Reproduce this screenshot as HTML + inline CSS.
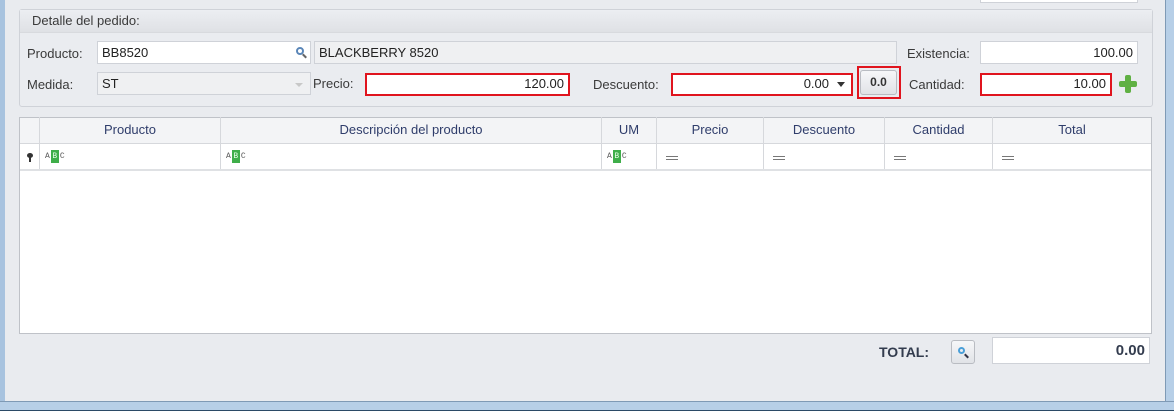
<!DOCTYPE html>
<html><head><meta charset="utf-8"><style>
*{box-sizing:border-box;margin:0;padding:0}
body{width:1174px;height:411px;overflow:hidden;background:#e9ebef;font-family:"Liberation Sans",sans-serif;font-size:13px;color:#333;position:relative}
.a{position:absolute}
.lbl{position:absolute;color:#3a3a3a;font-size:13px}
.tb{position:absolute;background:#fff;border:1px solid #cfd2d8;height:23px;padding:3px 4px;font-size:13px;color:#222;white-space:nowrap}
.red{border:2px solid #e0141e;padding-top:1px}
.r{text-align:right}
.hd{position:absolute;top:117px;height:26px;border-right:1px solid #d6d8dc;text-align:center;line-height:25px;color:#2f3d6b;font-size:13px}
.fc{position:absolute;top:144px;height:25px;border-right:1px solid #d6d8dc}
.abc{position:absolute;left:5px;top:6px;height:13px;font-size:8px;line-height:13px;font-family:"Liberation Mono",monospace;color:#555}
.abc b{display:inline-block;width:8px;height:13px;text-align:center;background:#3fae4a;color:#e8ffe8;font-weight:normal;margin:0 1px}
.eq{position:absolute;left:9px;top:12px;width:12px;height:4px;border-top:1px solid #777;border-bottom:1px solid #777}
</style></head><body>
<div class="a" style="left:0;top:0;width:5px;height:411px;background:#a8c3df"></div>
<div class="a" style="right:0;top:0;width:9px;height:411px;background:#b7cfe7;border-left:1px solid #7f9ab5"></div>
<div class="a" style="left:0;top:401px;width:1174px;height:10px;background:#b7cfe7;border-top:1px solid #7f9ab5;border-bottom:1px solid #2b4a66"></div>
<div class="a" style="left:980px;top:-2px;width:158px;height:5px;background:#fff;border:1px solid #cfd2d8"></div>

<div class="a" style="left:19px;top:9px;width:1134px;height:98px;border:1px solid #cfd2d8;border-radius:3px;background:#eaecf0"></div>
<div class="a" style="left:20px;top:10px;width:1132px;height:23px;background:linear-gradient(#eceef2,#dfe1e5);border-bottom:1px solid #d8dade"></div>
<div class="lbl" style="left:32px;top:13px">Detalle del pedido:</div>

<div class="lbl" style="left:27px;top:46px">Producto:</div>
<div class="tb" style="left:97px;top:41px;width:214px">BB8520<span style="position:absolute;right:6px;top:5px;width:8px;height:8px;border:2px solid #5a86b8;border-radius:50%"></span><span style="position:absolute;right:3px;top:13px;width:5px;height:2px;background:#666;transform:rotate(45deg)"></span></div>
<div class="tb" style="left:314px;top:41px;width:583px;background:#eff0f2">BLACKBERRY 8520</div>
<div class="lbl" style="left:907px;top:46px">Existencia:</div>
<div class="tb r" style="left:980px;top:41px;width:158px">100.00</div>

<div class="lbl" style="left:27px;top:77px">Medida:</div>
<div class="tb" style="left:97px;top:72px;width:214px;background:#eff0f2">ST<span style="position:absolute;right:7px;top:10px;border:4px solid transparent;border-top:4px solid #c8c8c8"></span></div>
<div class="lbl" style="left:313px;top:76px">Precio:</div>
<div class="tb r red" style="left:365px;top:73px;width:205px;height:23px">120.00</div>
<div class="lbl" style="left:593px;top:77px">Descuento:</div>
<div class="tb r red" style="left:671px;top:73px;width:182px;height:23px;padding-right:22px">0.00<span style="position:absolute;right:6px;top:7px;border:4px solid transparent;border-top:5px solid #333"></span></div>
<div class="a" style="left:857px;top:66px;width:44px;height:33px;border:2px solid #e0141e"></div>
<div class="a" style="left:860px;top:70px;width:37px;height:25px;border:1px solid #b9bcc2;border-radius:3px;background:linear-gradient(#f6f7f9,#e1e3e7);text-align:center;line-height:23px;font-weight:bold;font-size:12px;color:#333">0.0</div>
<div class="lbl" style="left:909px;top:77px">Cantidad:</div>
<div class="tb r red" style="left:980px;top:73px;width:132px;height:23px">10.00</div>
<div class="a" style="left:1119px;top:81px;width:18px;height:6px;background:#5fb043;border-radius:2px"></div>
<div class="a" style="left:1125px;top:75px;width:6px;height:18px;background:#5fb043;border-radius:2px"></div>

<div class="a" style="left:19px;top:117px;width:1133px;height:217px;background:#fff;border:1px solid #bfc2c8"></div>
<div class="a" style="left:20px;top:118px;width:1131px;height:26px;background:#f3f4f6;border-bottom:1px solid #d6d8dc"></div>
<div class="a" style="left:20px;top:144px;width:1131px;height:27px;border-bottom:2px solid #dfe1e4"></div>
<div class="hd" style="left:20px;width:20px"></div>
<div class="hd" style="left:40px;width:181px">Producto</div>
<div class="hd" style="left:221px;width:381px">Descripción del producto</div>
<div class="hd" style="left:602px;width:55px">UM</div>
<div class="hd" style="left:657px;width:107px">Precio</div>
<div class="hd" style="left:764px;width:121px">Descuento</div>
<div class="hd" style="left:885px;width:108px">Cantidad</div>
<div class="hd" style="left:993px;width:158px;border-right:none">Total</div>
<div class="fc" style="left:20px;width:20px"><span style="position:absolute;left:7px;top:9px;width:6px;height:5px;background:#333;border-radius:50%"></span><span style="position:absolute;left:9px;top:13px;width:2px;height:5px;background:#333"></span></div>
<div class="fc" style="left:40px;width:181px"><span class="abc">A<b>B</b>C</span></div>
<div class="fc" style="left:221px;width:381px"><span class="abc">A<b>B</b>C</span></div>
<div class="fc" style="left:602px;width:55px"><span class="abc">A<b>B</b>C</span></div>
<div class="fc" style="left:657px;width:107px"><span class="eq"></span></div>
<div class="fc" style="left:764px;width:121px"><span class="eq"></span></div>
<div class="fc" style="left:885px;width:108px"><span class="eq"></span></div>
<div class="fc" style="left:993px;width:158px;border-right:none"><span class="eq"></span></div>

<div class="lbl" style="left:879px;top:344px;font-weight:bold;color:#333c4e;font-size:14px">TOTAL:</div>
<div class="a" style="left:951px;top:340px;width:24px;height:24px;border:1px solid #b9bcc2;border-radius:3px;background:linear-gradient(#f6f7f9,#e1e3e7)"><span style="position:absolute;left:6px;top:6px;width:7px;height:7px;border:2px solid #4a9fd8;border-radius:50%"></span><span style="position:absolute;left:12px;top:14px;width:5px;height:2px;background:#334;transform:rotate(45deg)"></span></div>
<div class="tb r" style="left:992px;top:337px;width:158px;height:27px;font-weight:bold;font-size:15px;padding-top:4px;color:#333c4e">0.00</div>
</body></html>
